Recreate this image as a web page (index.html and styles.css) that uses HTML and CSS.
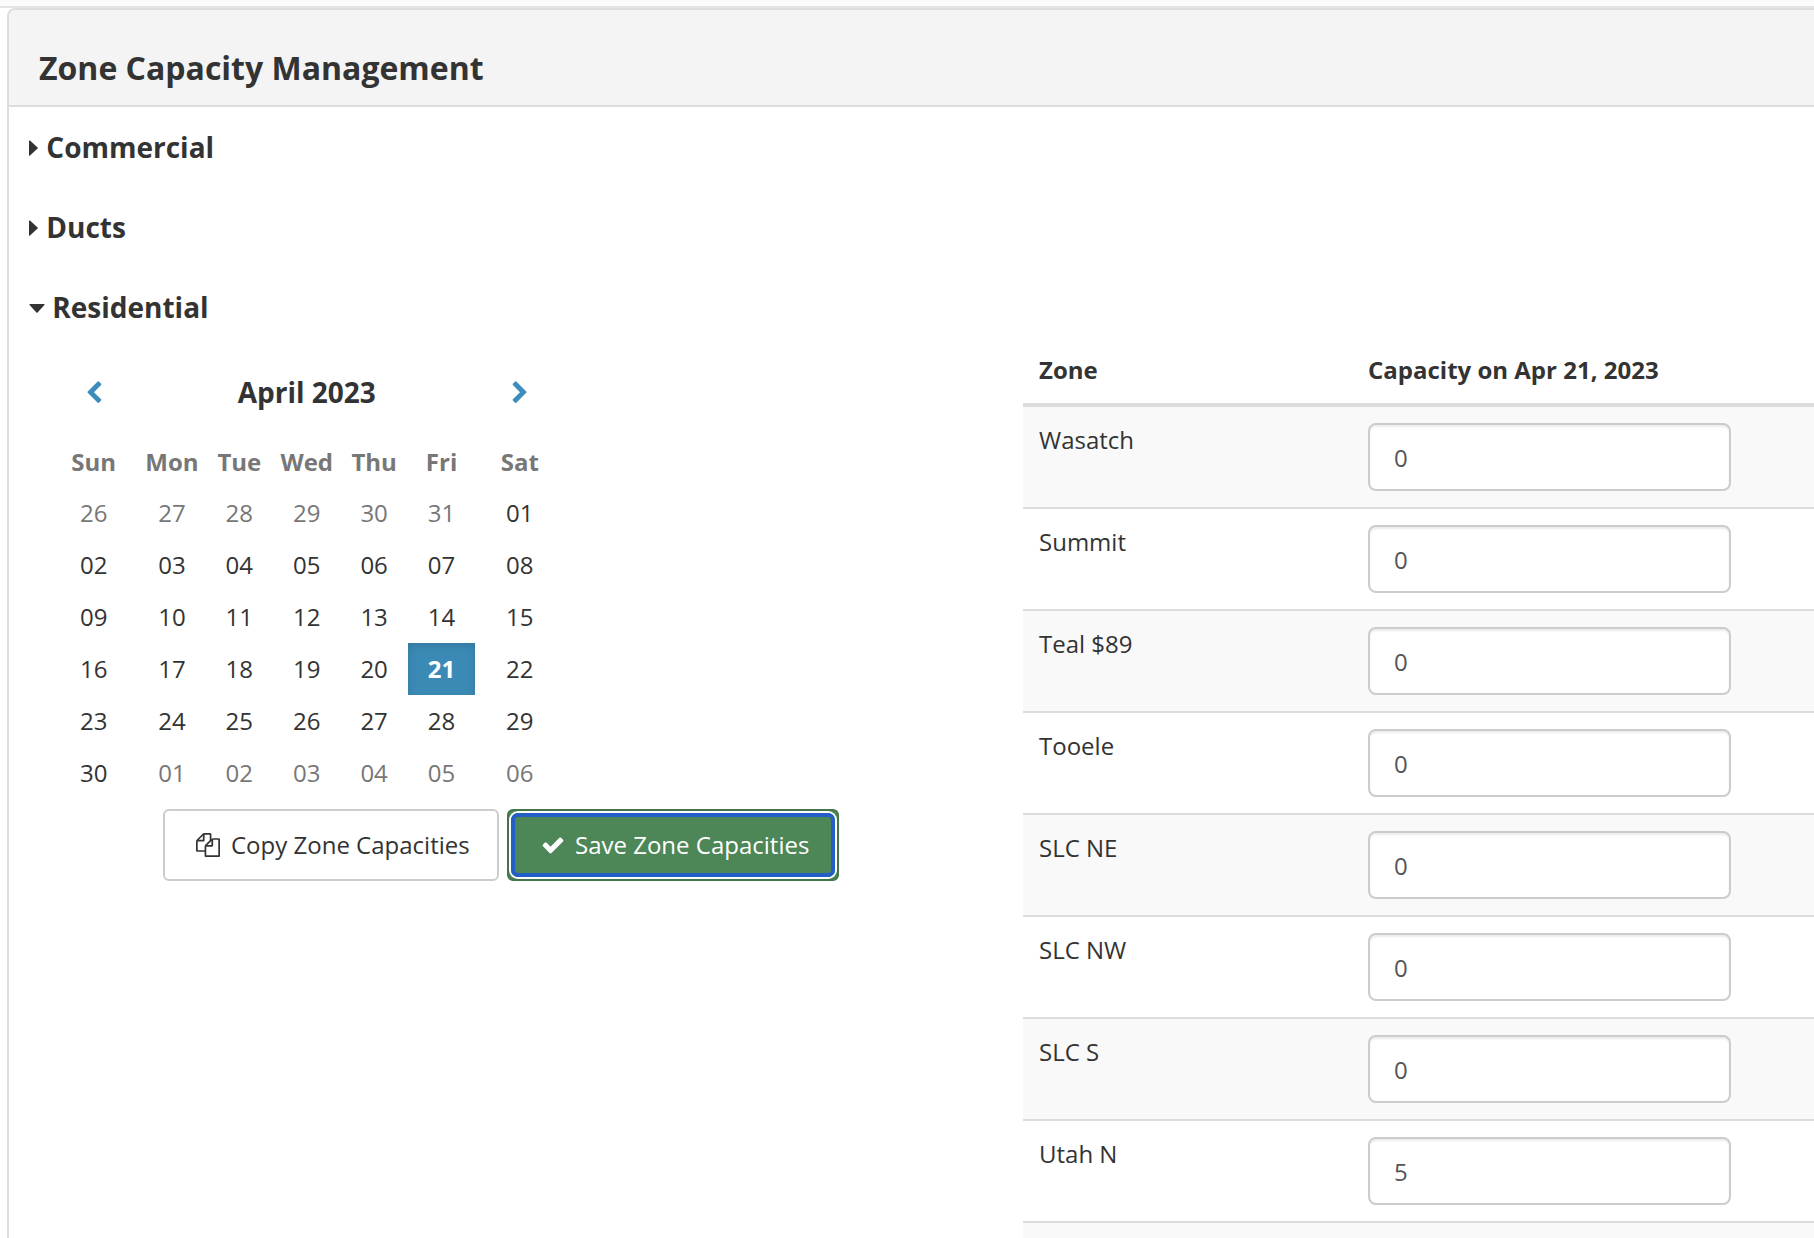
FILE: index.html
```
<!DOCTYPE html>
<html lang="en">
<head>
  <meta charset="UTF-8" />
  <meta name="viewport" content="width=device-width, initial-scale=1.0"/>
  <title>Zone Capacity Management</title>
  <link rel="stylesheet" href="styles.css">
</head>
<body>
  <div class="topbar"></div>
  <div class="panel">
    <div class="panel-heading">
      <h2>Zone Capacity Management</h2>
    </div>
    <div class="panel-body">
      <h3 class="section"><svg class="caret-right" viewBox="0 0 9 16"><path d="M0 1Q0 0 1 .6L8.6 7.4Q9 8 8.6 8.6L1 15.4Q0 16 0 15z"/></svg>Commercial</h3>
      <h3 class="section"><svg class="caret-right" viewBox="0 0 9 16"><path d="M0 1Q0 0 1 .6L8.6 7.4Q9 8 8.6 8.6L1 15.4Q0 16 0 15z"/></svg>Ducts</h3>
      <h3 class="section open"><svg class="caret-down" viewBox="0 0 16 9"><path d="M1 0Q0 0 .6 1L7.4 8.6Q8 9 8.6 8.6L15.4 1Q16 0 15 0z"/></svg>Residential</h3>

      <div class="columns">
        <div class="left">
          <table class="calendar">
            <colgroup>
              <col class="wide"><col><col><col><col><col><col class="wide">
            </colgroup>
            <thead>
              <tr class="month">
                <th><svg class="icon" viewBox="0 0 1792 1792"><path d="M1427 301l-531 531 531 531q19 19 19 45t-19 45l-166 166q-19 19-45 19t-45-19l-742-742q-19-19-19-45t19-45l742-742q19-19 45-19t45 19l166 166q19 19 19 45t-19 45z"/></svg></th>
                <th colspan="5">April 2023</th>
                <th><svg class="icon flip" viewBox="0 0 1792 1792"><path d="M1427 301l-531 531 531 531q19 19 19 45t-19 45l-166 166q-19 19-45 19t-45-19l-742-742q-19-19-19-45t19-45l742-742q19-19 45-19t45 19l166 166q19 19 19 45t-19 45z"/></svg></th>
              </tr>
              <tr class="days">
                <th>Sun</th><th>Mon</th><th>Tue</th><th>Wed</th><th>Thu</th><th>Fri</th><th>Sat</th>
              </tr>
            </thead>
            <tbody>
              <tr><td class="muted">26</td><td class="muted">27</td><td class="muted">28</td><td class="muted">29</td><td class="muted">30</td><td class="muted">31</td><td>01</td></tr>
              <tr><td>02</td><td>03</td><td>04</td><td>05</td><td>06</td><td>07</td><td>08</td></tr>
              <tr><td>09</td><td>10</td><td>11</td><td>12</td><td>13</td><td>14</td><td>15</td></tr>
              <tr><td>16</td><td>17</td><td>18</td><td>19</td><td>20</td><td class="selected">21</td><td>22</td></tr>
              <tr><td>23</td><td>24</td><td>25</td><td>26</td><td>27</td><td>28</td><td>29</td></tr>
              <tr><td>30</td><td class="muted">01</td><td class="muted">02</td><td class="muted">03</td><td class="muted">04</td><td class="muted">05</td><td class="muted">06</td></tr>
            </tbody>
          </table>
          <div class="buttons">
            <button class="btn btn-copy"><svg class="icon" viewBox="0 0 1792 1792"><path d="M1696 384q40 0 68 28t28 68v1216q0 40-28 68t-68 28h-960q-40 0-68-28t-28-68v-288h-544q-40 0-68-28t-28-68v-672q0-40 20-88t48-76l408-408q28-28 76-48t88-20h416q40 0 68 28t28 68v328q68-40 128-40h416zm-544 213l-299 299h299v-299zm-640-384l-299 299h299v-299zm196 647l316-316v-416h-384v416q0 40-28 68t-68 28h-416v640h512v-256q0-40 20-88t48-76zm956 804v-1152h-384v416q0 40-28 68t-68 28h-416v640h896z"/></svg>Copy Zone Capacities</button>
            <button class="btn btn-save"><svg class="icon" viewBox="0 0 1792 1792"><path d="M1671 566q0 40-28 68l-724 724-136 136q-28 28-68 28t-68-28l-136-136-362-362q-28-28-28-68t28-68l136-136q28-28 68-28t68 28l294 295 656-657q28-28 68-28t68 28l136 136q28 28 28 68z"/></svg>Save Zone Capacities</button>
          </div>
        </div>

        <table class="zones">
          <thead>
            <tr><th class="zone">Zone</th><th>Capacity on Apr 21, 2023</th></tr>
          </thead>
          <tbody>
            <tr><td>Wasatch</td><td><input type="text" value="0"></td></tr>
            <tr><td>Summit</td><td><input type="text" value="0"></td></tr>
            <tr><td>Teal $89</td><td><input type="text" value="0"></td></tr>
            <tr><td>Tooele</td><td><input type="text" value="0"></td></tr>
            <tr><td>SLC NE</td><td><input type="text" value="0"></td></tr>
            <tr><td>SLC NW</td><td><input type="text" value="0"></td></tr>
            <tr><td>SLC S</td><td><input type="text" value="0"></td></tr>
            <tr><td>Utah N</td><td><input type="text" value="5"></td></tr>
            <tr class="last"><td></td><td></td></tr>
          </tbody>
        </table>
      </div>
    </div>
  </div>
</body>
</html>
```
FILE: styles.css
```
* {
  box-sizing: border-box;
}

body {
  margin: 0;
  height: 100vh;
  overflow: hidden;
  font-family: "Open Sans", "Noto Sans", sans-serif;
  font-size: 24px;
  line-height: 34px;
  color: #333;
  background-color: #fff;
}

h2,
h3 {
  margin: 0;
  font-weight: bold;
}

svg {
  fill: currentColor;
  flex: none;
}

.icon {
  width: 24px;
  height: 24px;
}

.topbar {
  height: 8px;
  background-color: #fbfbfb;
  border-bottom: 2px solid #e5e5e5;
}

.panel {
  margin-left: 7px;
  height: calc(100vh - 8px);
  border: 2px solid #ddd;
  border-right: none;
  border-bottom: none;
  border-radius: 8px 0 0 0;
}

.panel-heading {
  height: 97px;
  padding: 40px 30px 0;
  background-color: #f4f4f4;
  border-bottom: 2px solid #ddd;
  border-radius: 6px 0 0 0;
}

.panel-heading h2 {
  font-size: 32px;
  line-height: 36px;
}

.panel-body {
  padding: 24px 0 0 20px;
}

.section {
  display: flex;
  align-items: center;
  height: 32px;
  margin-bottom: 48px;
  font-size: 28px;
  line-height: 32px;
}

.section.open {
  margin-bottom: 14px;
}

.caret-right {
  width: 9px;
  height: 16px;
  margin: 2px 8.3px 0 0;
}

.caret-down {
  width: 16px;
  height: 9px;
  margin: 3px 7.3px 0 0;
}

.columns {
  display: flex;
  align-items: flex-start;
}

.left {
  width: 994px;
  flex: none;
  padding: 14px 0 0 20px;
}

/* calendar */
.calendar {
  width: 515px;
  table-layout: fixed;
  border-collapse: collapse;
  text-align: center;
}

.calendar .wide {
  width: 89px;
}

.calendar th,
.calendar td {
  height: 52px;
  padding: 0 0 0 0.5px;
}

.calendar .month th {
  height: 84px;
  padding-bottom: 2px;
  font-size: 28px;
}

.calendar .month .icon {
  display: block;
  margin: 1px auto 0;
  color: #3c8dbc;
}

.calendar .flip {
  transform: scaleX(-1);
}

.calendar .days th,
.calendar .muted {
  color: #777;
}

.calendar .days th {
  padding-top: 2px;
}

.calendar .selected {
  background-color: #3b8ab6;
  color: #fff;
  font-weight: bold;
  box-shadow: inset 0 3px 8px rgba(0, 0, 0, 0.125);
}

/* buttons */
.buttons {
  display: flex;
  gap: 8px;
  margin: 10px 0 0 114px;
}

.btn {
  position: relative;
  display: flex;
  align-items: center;
  height: 72px;
  padding: 0 0 2px 31px;
  border: 2px solid #ccc;
  border-radius: 6px;
  background-color: #fff;
  color: #333;
  font-family: inherit;
  font-size: 24px;
  white-space: nowrap;
}

.btn .icon {
  margin: 2px 11px 0 0;
}

.btn-copy {
  width: 336px;
}

.btn-save {
  width: 332px;
  border-color: #427549;
  background-color: #4d8657;
  color: #fff;
}

.btn-save .icon {
  margin: 2px 10.5px 0 0.5px;
}

/* focus ring */
.btn-save::after {
  content: "";
  position: absolute;
  inset: 2px;
  border: 4px solid #245fc8;
  border-radius: 7px;
  box-shadow: 0 0 0 2px #fff;
}

/* zones table */
.zones {
  flex: 1;
  table-layout: fixed;
  border-spacing: 0;
}

.zones th,
.zones td {
  padding: 16px;
  text-align: left;
  vertical-align: top;
}

.zones .zone {
  width: 329px;
}

.zones th {
  height: 70px;
  border-bottom: 4px solid #ddd;
}

.zones td {
  height: 102px;
  border-top: 2px solid #ddd;
}

.zones tbody tr:first-child td {
  height: 100px;
  border-top: none;
}

.zones tbody tr:nth-child(odd) {
  background-color: #f9f9f9;
}

.zones .last td {
  height: 17px;
  padding: 0;
}

.zones input {
  display: block;
  width: 363px;
  height: 68px;
  padding: 0 24px;
  border: 2px solid #ccc;
  border-radius: 8px;
  background-color: #fff;
  box-shadow: inset 0 2px 2px rgba(0, 0, 0, 0.075);
  color: #555;
  font-family: inherit;
  font-size: 24px;
}
```
